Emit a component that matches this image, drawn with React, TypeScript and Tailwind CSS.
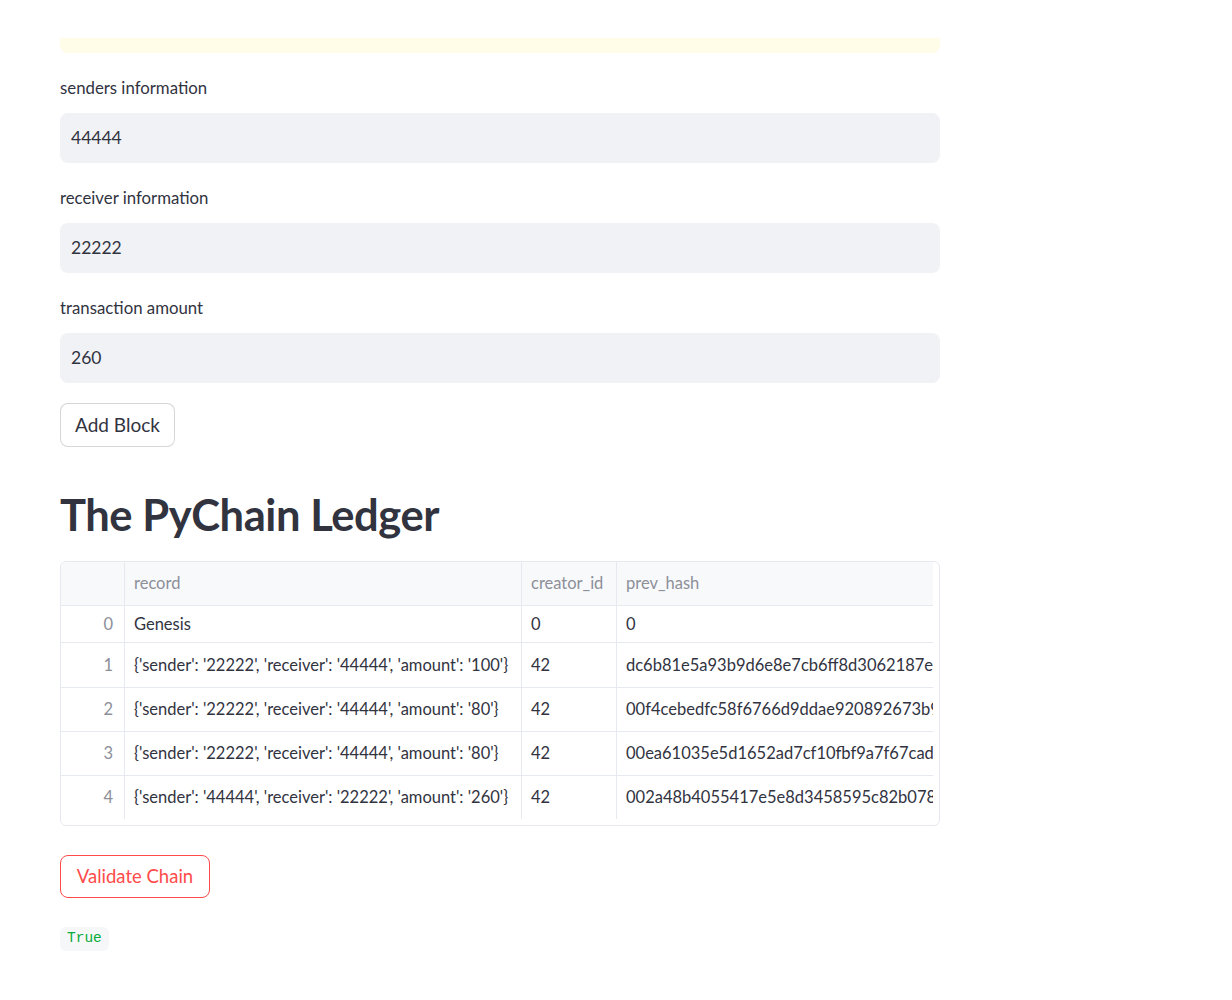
import React from "react";

const rows = [
  { idx: 0, record: "Genesis", creator: "0", hash: "0", h: "h-[37px]" },
  {
    idx: 1,
    record: "{'sender': '22222', 'receiver': '44444', 'amount': '100'}",
    creator: "42",
    hash: "dc6b81e5a93b9d6e8e7cb6ff8d3062187ec2a1f0",
    h: "h-[45px]",
  },
  {
    idx: 2,
    record: "{'sender': '22222', 'receiver': '44444', 'amount': '80'}",
    creator: "42",
    hash: "00f4cebedfc58f6766d9ddae920892673b94e2c1",
    h: "h-[44px]",
  },
  {
    idx: 3,
    record: "{'sender': '22222', 'receiver': '44444', 'amount': '80'}",
    creator: "42",
    hash: "00ea61035e5d1652ad7cf10fbf9a7f67cad5a3b2",
    h: "h-[44px]",
  },
  {
    idx: 4,
    record: "{'sender': '44444', 'receiver': '22222', 'amount': '260'}",
    creator: "42",
    hash: "002a48b4055417e5e8d3458595c82b0781a9d4e7",
    h: "h-[43px]",
  },
];

function Field({ label, value }: { label: string; value: string }) {
  return (
    <div className="mt-[23px]">
      <div className="flex h-[24px] items-center text-[16.8px]">{label}</div>
      <div className="mt-[13px] flex h-[50px] items-center rounded-lg bg-[#f0f2f6] px-[11px] text-[17.5px]">
        {value}
      </div>
    </div>
  );
}

export default function App() {
  return (
    <div className="min-h-screen bg-white font-['Lato','Noto_Sans',sans-serif] text-[#31333f]">
      <div className="ml-[60px] w-[880px] pt-[38px] pb-[40px]">
        {/* tail of the warning box above */}
        <div className="h-[15px] rounded-b-lg bg-[#fffce7]" />

        <Field label="senders information" value="44444" />
        <Field label="receiver information" value="22222" />
        <Field label="transaction amount" value="260" />

        <button className="mt-[20px] flex h-[44px] w-[115px] items-center justify-center rounded-lg border border-[#31333f33] bg-white text-[19px]">
          Add Block
        </button>

        <h1 className="mt-[41px] text-[43.5px] leading-[53px] font-bold tracking-[-0.01em]">
          The PyChain Ledger
        </h1>

        {/* dataframe */}
        <div className="mt-[20px] overflow-hidden rounded-md border border-[#e6e9ef] pb-[6px]">
          <div className="w-[872px] overflow-hidden">
            <div className="flex h-[44px] border-b border-[#e6e9ef] bg-[#f8f9fb] text-[16.5px] text-[#8d8f99]">
              <div className="w-[64px] shrink-0 border-r border-[#e6e9ef]" />
              <div className="flex w-[397px] shrink-0 items-center border-r border-[#e6e9ef] px-[9px]">
                record
              </div>
              <div className="flex w-[95px] shrink-0 items-center border-r border-[#e6e9ef] px-[9px]">
                creator_id
              </div>
              <div className="flex w-[316px] shrink-0 items-center px-[9px]">prev_hash</div>
            </div>
            {rows.map((r, i) => (
              <div
                key={r.idx}
                className={`flex text-[16.5px] ${r.h} ${i < rows.length - 1 ? "border-b border-[#e6e9ef]" : ""}`}
              >
                <div className="flex w-[64px] shrink-0 items-center justify-end border-r border-[#e6e9ef] pr-[11px] text-[#8d8f99]">
                  {r.idx}
                </div>
                <div className="flex w-[397px] shrink-0 items-center overflow-hidden border-r border-[#e6e9ef] px-[9px] whitespace-nowrap">
                  {r.record}
                </div>
                <div className="flex w-[95px] shrink-0 items-center border-r border-[#e6e9ef] px-[9px]">
                  {r.creator}
                </div>
                <div className="flex w-[316px] shrink-0 items-center overflow-hidden pl-[9px] whitespace-nowrap">
                  {r.hash}
                </div>
              </div>
            ))}
          </div>
        </div>

        <button className="mt-[29px] flex h-[43px] w-[150px] items-center justify-center rounded-lg border border-[#ff4b4b] bg-white text-[18.5px] text-[#ff4b4b]">
          Validate Chain
        </button>

        <div className="mt-[26px]">
          <code className="inline-flex h-[24px] items-center rounded-md bg-[#f6f7f9] px-[7px] font-['Liberation_Mono',monospace] text-[14.5px] text-[#09ab3b]">
            True
          </code>
        </div>
      </div>
    </div>
  );
}
